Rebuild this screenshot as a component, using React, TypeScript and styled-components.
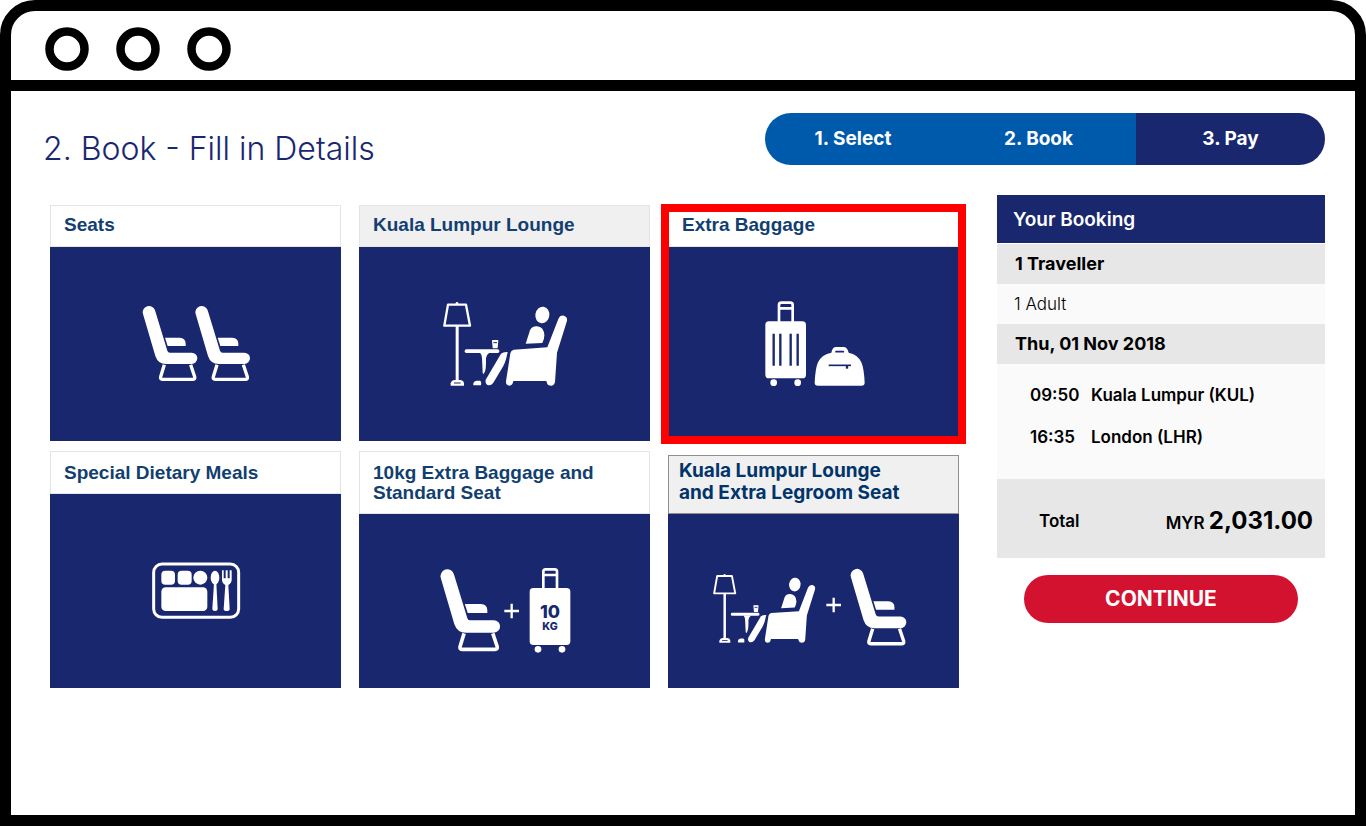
import React from "react";
import styled, { createGlobalStyle } from "styled-components";

const NAVY = "#19276f";
const BLUE = "#005aab";
const RED = "#d2122e";
const BRAND_FONT = 'Inter, "Open Sans", sans-serif';
const CARD_FONT = '"Liberation Sans", Arial, sans-serif';

const GlobalStyle = createGlobalStyle`
  *, *::before, *::after { box-sizing: border-box; }
  body { margin: 0; background: #fff; font-family: ${BRAND_FONT}; color: #000; }
  h1, h2, h3, p, ol, ul { margin: 0; padding: 0; }
  ol, ul { list-style: none; }
`;

const Frame = styled.div`
  display: flex;
  flex-direction: column;
  min-height: 100vh;
  border: 11px solid #000;
  border-radius: 35px 35px 0 0;
  background: #fff;
`;

const TitleBar = styled.header`
  display: flex;
  align-items: center;
  height: 80px;
  padding: 6px 0 0 33px;
  border-bottom: 11px solid #000;
`;

const Main = styled.main`
  display: flex;
  flex-direction: column;
  gap: 30px;
  padding: 22px 30px 60px 32px;
`;

const TopRow = styled.div`
  display: flex;
  align-items: center;
  justify-content: space-between;
`;

const Heading = styled.h1`
  padding-top: 20px;
  font-size: 32px;
  line-height: 32px;
  font-weight: 300;
  color: ${NAVY};
`;

const Steps = styled.ol`
  display: grid;
  grid-template-columns: 176px 1fr 189px;
  width: 560px;
  height: 52px;
  border-radius: 26px;
  overflow: hidden;
`;

const Step = styled.li<{ $last?: boolean }>`
  display: flex;
  align-items: center;
  justify-content: center;
  padding-bottom: 1px;
  background: ${(p) => (p.$last ? NAVY : BLUE)};
  color: #fff;
  font-size: 19px;
  font-weight: 700;
`;

const Columns = styled.div`
  display: flex;
  align-items: flex-start;
  gap: 38px;
`;

const CardGrid = styled.section`
  flex: 1;
  display: grid;
  grid-template-columns: repeat(3, 1fr);
  gap: 10px 18px;
  padding: 10px 0 0 7px;
`;

const Card = styled.button<{ $selected?: boolean; $inset?: boolean }>`
  position: relative;
  display: flex;
  flex-direction: column;
  min-height: ${(p) => (p.$inset ? "233px" : "236px")};
  margin: ${(p) => (p.$inset ? "4px 0 0" : "0")};
  padding: 0;
  border: 0;
  background: none;
  text-align: left;
  cursor: pointer;

  &::after {
    content: "";
    display: ${(p) => (p.$selected ? "block" : "none")};
    position: absolute;
    inset: -1px -7px -3px;
    border: 8px solid #f00;
  }
`;

const CardTitle = styled.span<{ $shaded?: boolean; $low?: boolean; $brand?: boolean }>`
  width: 100%;
  padding: ${(p) => (p.$brand ? "4px 10px 9px" : p.$low ? "11px 13px 10px" : "9px 13px 11px")};
  border: 1px solid ${(p) => (p.$brand ? "#8f8f8f" : "#e4e4e4")};
  background: ${(p) => (p.$shaded ? "#f0f0f0" : "#fff")};
  color: ${(p) => (p.$brand ? "#00346a" : "#123f70")};
  font-family: ${(p) => (p.$brand ? BRAND_FONT : CARD_FONT)};
  font-size: 19px;
  line-height: ${(p) => (p.$brand ? "22px" : "20px")};
  font-weight: 700;
  white-space: pre-line;
`;

const Tile = styled.span`
  flex: 1;
  display: flex;
  align-items: center;
  justify-content: center;
  width: 100%;
  background: ${NAVY};
`;

const Booking = styled.aside`
  display: flex;
  flex-direction: column;
  width: 328px;
`;

const BookingTitle = styled.h2`
  margin-bottom: 1px;
  padding: 1px 16px 0;
  background: ${NAVY};
  color: #fff;
  font-size: 19px;
  line-height: 47px;
  font-weight: 600;
`;

const Group = styled.h3`
  padding: 0 18px 1px;
  background: #e7e7e7;
  font-size: 18px;
  line-height: 39px;
  font-weight: 700;
`;

const Detail = styled.p`
  padding: 0 17px;
  background: #fafafa;
  font-size: 17px;
  line-height: 40px;
  font-weight: 300;
`;

const Flights = styled.ul`
  display: flex;
  flex-direction: column;
  gap: 22px;
  padding: 21px 33px 32px;
  background: #fafafa;
  font-size: 17px;
  line-height: 20px;
  font-weight: 600;
`;

const Flight = styled.li`
  display: grid;
  grid-template-columns: 49px 1fr;
  gap: 12px;
`;

const Total = styled.div`
  display: flex;
  align-items: center;
  justify-content: space-between;
  height: 79px;
  padding: 4px 12px 0 42px;
  background: #e7e7e7;
  font-size: 17px;
  font-weight: 600;
`;

const Amount = styled.strong`
  font-size: 24px;
  font-weight: 700;
`;

const Continue = styled.button`
  align-self: center;
  width: 274px;
  height: 48px;
  margin-top: 17px;
  padding: 0 0 2px;
  border: 0;
  border-radius: 24px;
  background: ${RED};
  color: #fff;
  font-family: inherit;
  font-size: 21px;
  font-weight: 700;
  cursor: pointer;
`;

/* Tile drawings share one scale; cx and cy give the point that sits in the tile's middle. */
function Drawing({ cx, cy, children }: { cx: number; cy: number; children: React.ReactNode }) {
  return (
    <svg width="240" height="120" viewBox={`${cx - 360} ${cy - 180} 720 360`} fill="#fff" aria-hidden="true">
      {children}
    </svg>
  );
}

function Seat({ transform }: { transform?: string }) {
  return (
    <g transform={transform}>
      <path d="M39 72A18.500 18.500 0 0 1 75 61L112 182Q114 188 120 188H185A17 17 0 0 1 185 222H108Q84 222 76 198Z" />
      <path d="M105 143H149Q167 144 167 161V168H113Z" />
      <path
        d="M103 224L92 260Q90 268 97 268H188Q196 268 194 260L182 224"
        fill="none"
        stroke="#fff"
        strokeWidth="10"
      />
    </g>
  );
}

function Lounge({ transform }: { transform?: string }) {
  return (
    <g transform={transform}>
      <path d="M54 44H108L120 107H43Z" fill="none" stroke="#fff" strokeWidth="7" strokeLinejoin="round" />
      <circle cx="81" cy="40" r="4" />
      <rect x="77" y="107" width="9" height="166" />
      <path d="M62 287V280Q64 271 74 270H90Q101 271 102 280V287Z" />
      <path d="M72 279H92" stroke={NAVY} strokeWidth="3" />
      <rect x="104" y="178" width="104" height="11" rx="5" />
      <path d="M150 188Q156 194 156 204L158 248Q160 255 163 248Q169 240 168 204Q169 194 178 188Z" />
      <path d="M188 152H203L201 173H190Z" stroke="#fff" strokeWidth="4" strokeLinejoin="round" />
      <path d="M190 158H201" stroke={NAVY} strokeWidth="3" />
      <path d="M130 286Q128 274 140 272H150Q155 274 153 286Z" />
      <path d="M213 191Q220 185 233 186Q228 213 220 228L190 278Q182 289 171 284Q164 278 168 268Z" />
      <ellipse cx="337" cy="75" rx="21" ry="25" transform="rotate(8 337 75)" />
      <path d="M287 161L300 121Q306 108 321 109Q342 111 343 136Q343 148 337 159Z" />
      <path d="M251 179L352 172L385 87Q390 75 402 77Q413 81 411 92L381 188L375 276Q373 287 363 287Q353 287 351 279L349 273H250Q248 287 238 287Q227 285 228 274L241 190Q243 181 251 179Z" />
    </g>
  );
}

function Plus({ x, y }: { x: number; y: number }) {
  return <path d={`M${x - 22} ${y}h44M${x} ${y - 22}v44`} stroke="#fff" strokeWidth="7" />;
}

function Suitcase({ transform, children }: { transform?: string; children: React.ReactNode }) {
  return (
    <g transform={transform}>
      <rect x="45" y="94" width="122" height="171" rx="11" />
      <path
        d="M86 96V45Q86 38 93 38H120Q127 38 127 45V96M86 55H127"
        fill="none"
        stroke="#fff"
        strokeWidth="8"
      />
      <circle cx="70" cy="278" r="10" />
      <circle cx="142" cy="278" r="10" />
      {children}
    </g>
  );
}

const SeatsIcon = () => (
  <Drawing cx={198} cy={162}>
    <Seat />
    <Seat transform="translate(158 0)" />
  </Drawing>
);

const LoungeIcon = () => (
  <Drawing cx={225} cy={162}>
    <Lounge />
  </Drawing>
);

const BaggageIcon = () => (
  <Drawing cx={191} cy={162}>
    <Suitcase>
      <path d="M70 131V227M90 131V227M121 131V227M142 131V227" stroke={NAVY} strokeWidth="7" />
    </Suitcase>
    <path d="M193 278Q195 235 203 217Q214 193 243 188Q246 171 257 171H280Q291 171 295 188Q322 193 333 217Q341 235 343 278Q343 287 333 287H203Q193 287 193 278Z" />
    <path d="M257 185H279" stroke={NAVY} strokeWidth="5" strokeLinecap="round" />
    <path d="M235 226H302" stroke={NAVY} strokeWidth="5" />
    <path d="M290 226V236" stroke={NAVY} strokeWidth="7" />
  </Drawing>
);

const MealIcon = () => (
  <Drawing cx={168} cy={122}>
    <rect x="41" y="41" width="255" height="160" rx="25" fill="none" stroke="#fff" strokeWidth="9" />
    <rect x="64" y="61" width="41" height="42" rx="12" />
    <rect x="113" y="61" width="42" height="42" rx="12" />
    <circle cx="181" cy="82" r="21" />
    <rect x="64" y="111" width="138" height="71" rx="13" />
    <ellipse cx="225" cy="82" rx="13" ry="21" />
    <path d="M222 98H229L233 176Q233 182 225 182Q217 182 217 176Z" />
    <path d="M246 60H251V84H257V60H263V84H269V60H275V88Q275 98 265 104L269 176Q269 182 260 182Q251 182 251 176L256 104Q246 98 246 88Z" />
  </Drawing>
);

const SeatBaggageIcon = () => (
  <Drawing cx={226} cy={138}>
    <Seat transform="translate(-9 -9) scale(1.09)" />
    <Plus x={246} y={168} />
    <Suitcase transform="translate(255 5)">
      <text x="106" y="185" fill={NAVY} fontFamily={BRAND_FONT} fontSize="53" fontWeight="800" textAnchor="middle">
        10
      </text>
      <text x="106" y="220" fill={NAVY} fontFamily={BRAND_FONT} fontSize="32" fontWeight="800" textAnchor="middle">
        KG
      </text>
    </Suitcase>
  </Drawing>
);

const LoungeSeatIcon = () => (
  <Drawing cx={340} cy={137}>
    <Lounge transform="translate(5 26) scale(0.823)" />
    <Plus x={399} y={149} />
    <Seat transform="translate(411 -8) scale(1.02)" />
  </Drawing>
);

const steps = ["1. Select", "2. Book", "3. Pay"];

const flights = [
  { time: "09:50", place: "Kuala Lumpur (KUL)" },
  { time: "16:35", place: "London (LHR)" },
];

const extras = [
  { title: "Seats", Icon: SeatsIcon },
  { title: "Kuala Lumpur Lounge", Icon: LoungeIcon, shaded: true },
  { title: "Extra Baggage", Icon: BaggageIcon, selected: true },
  { title: "Special Dietary Meals", Icon: MealIcon, low: true },
  { title: "10kg Extra Baggage and\nStandard Seat", Icon: SeatBaggageIcon, low: true },
  { title: "Kuala Lumpur Lounge\nand Extra Legroom Seat", Icon: LoungeSeatIcon, shaded: true, brand: true },
];

export default function App() {
  return (
    <>
      <GlobalStyle />
      <Frame>
        <TitleBar>
          <svg width="188" height="46" viewBox="0 0 188 46" fill="none" stroke="#000" strokeWidth="8.500" aria-hidden="true">
            <circle cx="23" cy="23" r="17.500" />
            <circle cx="94" cy="23" r="17.500" />
            <circle cx="165" cy="23" r="17.500" />
          </svg>
        </TitleBar>
        <Main>
          <TopRow>
            <Heading>2. Book - Fill in Details</Heading>
            <Steps>
              {steps.map((step, i) => (
                <Step key={step} $last={i === steps.length - 1}>
                  {step}
                </Step>
              ))}
            </Steps>
          </TopRow>
          <Columns>
            <CardGrid>
              {extras.map(({ title, Icon, shaded, selected, low, brand }) => (
                <Card key={title} type="button" $selected={selected} $inset={brand}>
                  <CardTitle $shaded={shaded} $low={low} $brand={brand}>
                    {title}
                  </CardTitle>
                  <Tile>
                    <Icon />
                  </Tile>
                </Card>
              ))}
            </CardGrid>
            <Booking>
              <BookingTitle>Your Booking</BookingTitle>
              <Group>1 Traveller</Group>
              <Detail>1 Adult</Detail>
              <Group>Thu, 01 Nov 2018</Group>
              <Flights>
                {flights.map(({ time, place }) => (
                  <Flight key={time}>
                    <time>{time}</time>
                    <span>{place}</span>
                  </Flight>
                ))}
              </Flights>
              <Total>
                <span>Total</span>
                <span>
                  MYR <Amount>2,031.00</Amount>
                </span>
              </Total>
              <Continue type="button">CONTINUE</Continue>
            </Booking>
          </Columns>
        </Main>
      </Frame>
    </>
  );
}
